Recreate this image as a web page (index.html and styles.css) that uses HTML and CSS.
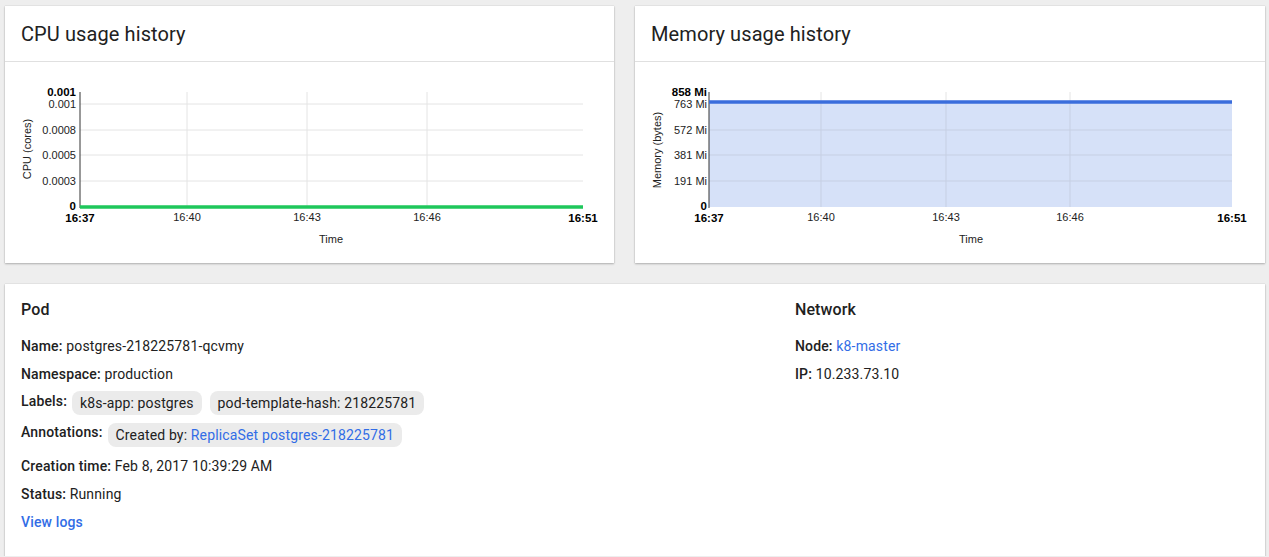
FILE: index.html
```html
<!DOCTYPE html>
<html lang="en">
<head>
  <meta charset="UTF-8">
  <meta name="viewport" content="width=device-width, initial-scale=1.0">
  <title>Pod details</title>
  <link rel="stylesheet" href="styles.css">
</head>
<body>

  <div class="page">
    <div class="charts-row">
      <div class="card">
        <div class="card-title">CPU usage history</div>
        <div class="chart">
          <svg width="609" height="201" viewBox="0 0 609 201">
            <g class="grid">
              <line x1="75" y1="42" x2="578" y2="42"/>
              <line x1="75" y1="68" x2="578" y2="68"/>
              <line x1="75" y1="93" x2="578" y2="93"/>
              <line x1="75" y1="119" x2="578" y2="119"/>
              <line x1="182" y1="30" x2="182" y2="145"/>
              <line x1="302" y1="30" x2="302" y2="145"/>
              <line x1="422" y1="30" x2="422" y2="145"/>
            </g>
            <line class="axis" x1="75" y1="30" x2="75" y2="146"/>
            <line class="cpu-line" x1="75" y1="145" x2="578" y2="145"/>
            <g class="tick y-tick">
              <text x="71" y="34" class="strong">0.001</text>
              <text x="71" y="46">0.001</text>
              <text x="71" y="72">0.0008</text>
              <text x="71" y="97">0.0005</text>
              <text x="71" y="123">0.0003</text>
              <text x="71" y="148" class="strong">0</text>
            </g>
            <g class="tick x-tick">
              <text x="75" y="160" class="strong">16:37</text>
              <text x="182" y="159">16:40</text>
              <text x="302" y="159">16:43</text>
              <text x="422" y="159">16:46</text>
              <text x="578" y="160" class="strong">16:51</text>
            </g>
            <text class="axis-title" x="326" y="181">Time</text>
            <text class="axis-title" transform="translate(26 87) rotate(-90)">CPU (cores)</text>
          </svg>
        </div>
      </div>

      <div class="card">
        <div class="card-title">Memory usage history</div>
        <div class="chart">
          <svg width="630" height="201" viewBox="0 0 630 201">
            <rect class="mem-fill" x="74" y="40" width="523" height="105"/>
            <g class="grid">
              <line x1="186" y1="30" x2="186" y2="40"/>
              <line x1="311" y1="30" x2="311" y2="40"/>
              <line x1="435" y1="30" x2="435" y2="40"/>
            </g>
            <g class="grid-fill">
              <line x1="74" y1="68" x2="597" y2="68"/>
              <line x1="74" y1="93" x2="597" y2="93"/>
              <line x1="74" y1="119" x2="597" y2="119"/>
              <line x1="186" y1="40" x2="186" y2="145"/>
              <line x1="311" y1="40" x2="311" y2="145"/>
              <line x1="435" y1="40" x2="435" y2="145"/>
            </g>
            <line class="axis" x1="74" y1="30" x2="74" y2="146"/>
            <line class="mem-line" x1="74" y1="40" x2="597" y2="40"/>
            <g class="tick y-tick">
              <text x="72" y="34" class="strong">858 Mi</text>
              <text x="72" y="46">763 Mi</text>
              <text x="72" y="72">572 Mi</text>
              <text x="72" y="97">381 Mi</text>
              <text x="72" y="123">191 Mi</text>
              <text x="72" y="148" class="strong">0</text>
            </g>
            <g class="tick x-tick">
              <text x="74" y="160" class="strong">16:37</text>
              <text x="186" y="159">16:40</text>
              <text x="311" y="159">16:43</text>
              <text x="435" y="159">16:46</text>
              <text x="597" y="160" class="strong">16:51</text>
            </g>
            <text class="axis-title" x="336" y="181">Time</text>
            <text class="axis-title" transform="translate(26 88) rotate(-90)">Memory (bytes)</text>
          </svg>
        </div>
      </div>
    </div>

    <div class="card details">
      <div class="details-col">
        <div class="section-title">Pod</div>
        <div class="row"><span class="key">Name:</span> postgres-218225781-qcvmy</div>
        <div class="row"><span class="key">Namespace:</span> production</div>
        <div class="row chips-row labels-row">
          <span class="key">Labels:</span>
          <span class="chip">k8s-app: postgres</span>
          <span class="chip">pod-template-hash: 218225781</span>
        </div>
        <div class="row chips-row annotations-row">
          <span class="key">Annotations:</span>
          <span class="chip">Created by: <a href="#">ReplicaSet postgres-218225781</a></span>
        </div>
        <div class="row"><span class="key">Creation time:</span> Feb 8, 2017 10:39:29 AM</div>
        <div class="row"><span class="key">Status:</span> Running</div>
        <div class="row"><a href="#" class="action">View logs</a></div>
      </div>
      <div class="details-col">
        <div class="section-title">Network</div>
        <div class="row"><span class="key">Node:</span> <a href="#">k8-master</a></div>
        <div class="row"><span class="key">IP:</span> 10.233.73.10</div>
      </div>
    </div>
  </div>

</body>
</html>
```

FILE: styles.css
```css
body, html {
  margin: 0;
  padding: 0;
  background-color: #eeeeee;
  font-family: Roboto, "Noto Sans", Arial, sans-serif;
  color: #212121;
}

.page {
  padding: 6px 4px 0 5px;
}

.charts-row {
  display: grid;
  grid-template-columns: 609px 630px;
  gap: 21px;
}

.card {
  background-color: #fff;
  box-shadow: 0 1px 2px rgba(0, 0, 0, 0.25), 0 0 1px rgba(0, 0, 0, 0.2);
}

.card-title {
  height: 55px;
  line-height: 57px;
  padding-left: 16px;
  font-size: 20px;
  letter-spacing: 0.1px;
  border-bottom: 1px solid #e0e0e0;
}

.chart {
  height: 201px;
}

.chart svg {
  display: block;
}

.grid line {
  stroke: #e4e4e4;
  stroke-width: 1;
}

.grid-fill line {
  stroke: #c6cfe3;
  stroke-width: 1;
}

.axis {
  stroke: #333;
  stroke-width: 1;
}

.cpu-line {
  stroke: #1ec75b;
  stroke-width: 3.5;
}

.mem-fill {
  fill: #d6e1f8;
}

.mem-line {
  stroke: #3a6ddc;
  stroke-width: 3.5;
}

.tick text,
.axis-title {
  font-family: "Liberation Sans", Arial, sans-serif;
  font-size: 11px;
  fill: #222;
}

.y-tick text {
  text-anchor: end;
}

.x-tick text,
.axis-title {
  text-anchor: middle;
}

.tick .strong {
  font-size: 11.5px;
  font-weight: bold;
  fill: #000;
}

.details {
  margin-top: 21px;
  padding: 16px 16px 20px;
  display: grid;
  grid-template-columns: 774px 1fr;
  font-size: 14px;
  letter-spacing: 0.15px;
}

.section-title {
  font-size: 16px;
  font-weight: 500;
  line-height: 20px;
  margin-bottom: 12px;
  letter-spacing: 0.1px;
}

.row {
  height: 28px;
  line-height: 28px;
  white-space: nowrap;
}

.key {
  font-weight: 500;
}

.chips-row {
  display: flex;
  align-items: center;
  gap: 8px;
}

.chips-row .key {
  margin-right: -3px;
  align-self: flex-start;
  line-height: 26px;
}

.labels-row {
  height: 30px;
}

.annotations-row {
  height: 34px;
}

.annotations-row .key {
  line-height: 28px;
}

.chip {
  display: inline-block;
  height: 24px;
  line-height: 24px;
  padding: 0 8px;
  border-radius: 8px;
  background-color: #ebebeb;
}

a {
  color: #326de6;
  text-decoration: none;
}

.action {
  font-weight: 500;
}
```
